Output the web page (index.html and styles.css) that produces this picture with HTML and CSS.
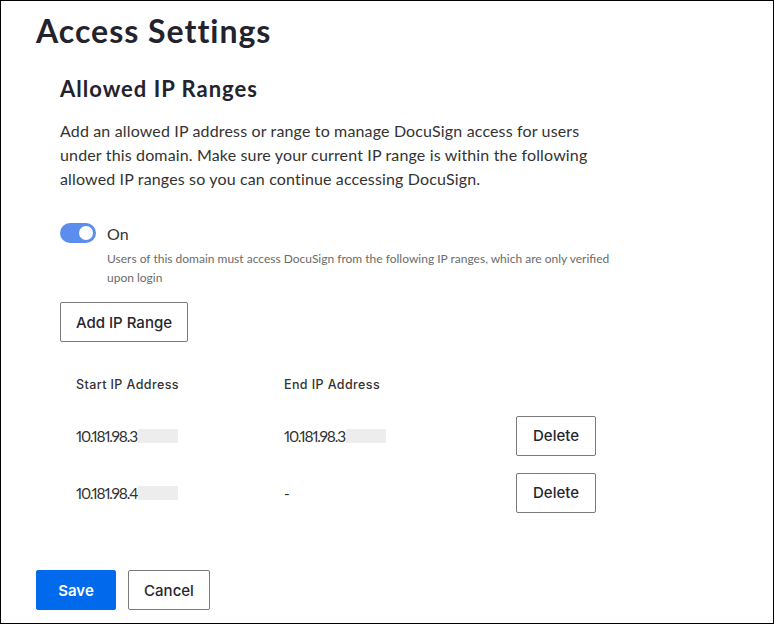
FILE: index.html
```html
<!DOCTYPE html>
<html lang="en">
<head>
    <meta charset="UTF-8">
    <meta name="viewport" content="width=device-width, initial-scale=1.0">
    <title>Access Settings</title>
    <link rel="stylesheet" href="styles.css">
</head>
<body>
    <div class="page">
        <h1 class="page-title">Access Settings</h1>

        <section class="section">
            <h2 class="section-title">Allowed IP Ranges</h2>
            <p class="intro">Add an allowed IP address or range to manage DocuSign access for users under this domain. Make sure your current IP range is within the following allowed IP ranges so you can continue accessing DocuSign.</p>

            <div class="toggle-row">
                <span class="switch"><span class="knob"></span></span>
                <span class="toggle-label">On</span>
            </div>
            <p class="hint">Users of this domain must access DocuSign from the following IP ranges, which are only verified upon login</p>

            <button class="btn btn-add">Add IP Range</button>

            <div class="ranges">
                <div class="ranges-head">Start IP Address</div>
                <div class="ranges-head">End IP Address</div>
                <div class="ranges-head"></div>

                <div class="ranges-cell">10.181.98.3<span class="redacted"></span></div>
                <div class="ranges-cell">10.181.98.3<span class="redacted"></span></div>
                <div class="ranges-cell"><button class="btn btn-small">Delete</button></div>

                <div class="ranges-cell">10.181.98.4<span class="redacted"></span></div>
                <div class="ranges-cell">-</div>
                <div class="ranges-cell"><button class="btn btn-small">Delete</button></div>
            </div>
        </section>

        <div class="actions">
            <button class="btn btn-primary">Save</button>
            <button class="btn btn-cancel">Cancel</button>
        </div>
    </div>
</body>
</html>
```

FILE: styles.css
```css
body {
    margin: 0;
    padding: 0;
    background-color: white;
    font-family: Lato, "Noto Sans", sans-serif;
    color: #262630;
}

.page {
    box-sizing: border-box;
    width: 774px;
    height: 624px;
    border: 1px solid black;
    padding: 0 0 0 35px;
}

.page-title {
    margin: 0;
    padding-top: 10px;
    font-size: 32px;
    line-height: 40px;
    font-weight: 700;
    letter-spacing: 1px;
    color: #24232d;
}

.section {
    padding-left: 24px;
}

.section-title {
    margin: 24px 0 0 0;
    font-size: 22px;
    line-height: 28px;
    font-weight: 700;
    letter-spacing: 1px;
    color: #24232d;
}

.intro {
    margin: 16px 0 0 0;
    width: 560px;
    font-size: 16px;
    line-height: 24px;
    letter-spacing: 0.15px;
    color: #333;
}

.toggle-row {
    display: flex;
    align-items: center;
    gap: 11px;
    margin-top: 32px;
}

.switch {
    box-sizing: border-box;
    display: flex;
    align-items: center;
    justify-content: flex-end;
    width: 36px;
    height: 20px;
    padding: 3px;
    border-radius: 10px;
    background-color: #5b8def;
}

.knob {
    width: 14px;
    height: 14px;
    border-radius: 50%;
    background-color: white;
}

.toggle-label {
    font-size: 16px;
    color: #333;
}

.hint {
    margin: 6px 0 0 47px;
    width: 510px;
    font-size: 12px;
    line-height: 19px;
    color: #6b6b6b;
}

.btn {
    box-sizing: border-box;
    height: 40px;
    padding: 0;
    border: 1px solid #7a7a7a;
    border-radius: 2px;
    background-color: white;
    font-family: Inter, Lato, sans-serif;
    font-size: 15px;
    font-weight: 500;
    white-space: nowrap;
    color: #262630;
}

.btn-add {
    display: block;
    margin-top: 15px;
    width: 128px;
}

.btn-small {
    width: 80px;
}

.btn-primary {
    width: 80px;
    background-color: #0069ec;
    border-color: #0069ec;
    font-weight: 600;
    color: white;
}

.btn-cancel {
    width: 82px;
}

.ranges {
    display: grid;
    grid-template-columns: 208px 232px 120px;
    grid-template-rows: 46px;
    grid-auto-rows: 57px;
    margin-top: 19px;
}

.ranges-head,
.ranges-cell {
    display: flex;
    align-items: center;
    padding-left: 16px;
}

.ranges-head {
    font-family: Inter, Lato, sans-serif;
    font-size: 12.5px;
    font-weight: 500;
    letter-spacing: 0.4px;
    color: #333;
}

.ranges-cell {
    font-size: 15.5px;
    font-variant-numeric: proportional-nums;
    letter-spacing: -1.2px;
    color: #333;
}

.redacted {
    display: inline-block;
    width: 40px;
    height: 14px;
    margin-left: 1px;
    background-color: #ededed;
}

.actions {
    display: flex;
    gap: 12px;
    margin-top: 49px;
}
```
